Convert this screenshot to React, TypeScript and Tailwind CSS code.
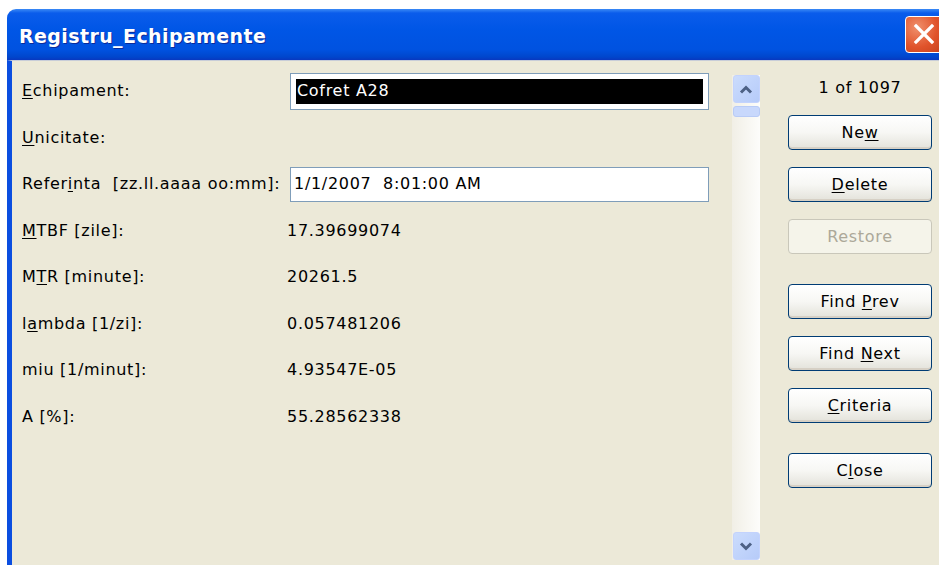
import { ReactNode } from "react";

// Underlines the access-key letter of a caption
const Key = ({ children }: { children: ReactNode }) => <span className="underline underline-offset-2">{children}</span>;

type Field = {
  label: ReactNode;
  value: string;
  kind: "text" | "selected" | "input" | "empty";
};

const fields: Field[] = [
  { label: <><Key>E</Key>chipament:</>, value: "Cofret A28", kind: "selected" },
  { label: <><Key>U</Key>nicitate:</>, value: "", kind: "empty" },
  { label: <>Refer<Key>i</Key>nta&nbsp; [zz.ll.aaaa oo:mm]:</>, value: "1/1/2007\u00a0 8:01:00 AM", kind: "input" },
  { label: <><Key>M</Key>TBF [zile]:</>, value: "17.39699074", kind: "text" },
  { label: <>M<Key>T</Key>R [minute]:</>, value: "20261.5", kind: "text" },
  { label: <>l<Key>a</Key>mbda [1/zi]:</>, value: "0.057481206", kind: "text" },
  { label: <>miu [1/minut]:</>, value: "4.93547E-05", kind: "text" },
  { label: <>A [%]:</>, value: "55.28562338", kind: "text" },
];

const Button = ({ children, disabled, className = "" }: { children: ReactNode; disabled?: boolean; className?: string }) => (
  <div
    className={`h-[35px] w-[144px] rounded-[4px] border flex items-center justify-center ${
      disabled
        ? "border-[#c9c7ba] bg-[#f5f4ea] text-[#aca899]"
        : "border-[#003c74] bg-gradient-to-b from-white via-[#f7f7f4] to-[#e3e2da] text-black shadow-[inset_0_-2px_0_#d6d0c5]"
    } ${className}`}
  >
    <span>{children}</span>
  </div>
);

const Arrow = ({ up }: { up?: boolean }) => (
  <div className="h-[28px] w-[27px] rounded-[3px] border border-[#c3d3fd] bg-gradient-to-br from-[#cbdcfd] to-[#b6cbf9] flex items-center justify-center">
    <svg width="14" height="9" viewBox="0 0 14 9">
      <path d={up ? "M2 7.5 L7 2.5 L12 7.5" : "M2 1.5 L7 6.5 L12 1.5"} fill="none" stroke="#4d6185" strokeWidth="3" />
    </svg>
  </div>
);

export default function App() {
  return (
    <div className="w-[939px] h-[565px] bg-white pt-[9px] pl-[7px] overflow-hidden font-['DejaVu_Sans',sans-serif] text-[16px] tracking-[0.7px] text-black">
      <div className="h-[556px] flex flex-col rounded-tl-[9px] overflow-hidden">
        {/* title bar */}
        <div className="h-[51px] shrink-0 flex items-center justify-between pl-[12px] bg-[linear-gradient(to_bottom,#3b8af5_0%,#0a5ceb_8%,#0056e6_40%,#0052e0_80%,#0046cc_94%,#0838c0_100%)]">
          <span className="text-white font-bold text-[19px] tracking-[0.4px] [text-shadow:1px_1px_0_#0b2a9a] mt-[4px]">Registru_Echipamente</span>
          <div className="h-[37px] w-[40px] -mr-[6px] mt-[-1px] rounded-[4px] border border-white bg-[radial-gradient(circle_at_30%_30%,#f0906c,#e0532b_55%,#c2401c)] flex items-center pl-[7px]">
            <svg width="22" height="22" viewBox="0 0 22 22">
              <path d="M3 3 L19 19 M19 3 L3 19" stroke="white" strokeWidth="3.2" strokeLinecap="square" />
            </svg>
          </div>
        </div>

        {/* dialog body */}
        <div className="flex-1 flex bg-[#ece9d8] border-l-[5px] border-[#0b4ee0] border-t border-t-[#c8cdd8]">
          <div className="w-[720px] pt-[7px] pl-[10px]">
            {fields.map((f, i) => (
              <div key={i} className="h-[46.5px] flex items-center">
                <div className="w-[265px] shrink-0 whitespace-nowrap">{f.label}</div>
                {f.kind === "text" && <div>{f.value}</div>}
                {f.kind === "selected" && (
                  <div className="ml-[3px] h-[37px] w-[419px] border border-[#7f9db9] bg-white p-[5px]">
                    <div className="h-full bg-black text-white flex items-center pl-[1px] leading-none">{f.value}</div>
                  </div>
                )}
                {f.kind === "input" && (
                  <div className="ml-[3px] h-[35px] w-[419px] border border-[#7f9db9] bg-white flex items-center pl-[3px]">{f.value}</div>
                )}
              </div>
            ))}
          </div>

          {/* scroll bar */}
          <div className="w-[28px] mt-[14px] mb-[5px] flex flex-col justify-between items-center bg-gradient-to-r from-[#f1efe6] to-[#fdfdfb]">
            <div className="flex flex-col items-center gap-[3px]">
              <Arrow up />
              <div className="h-[11px] w-[27px] rounded-[3px] border border-[#b8cbf6] bg-[#c8d8fc]" />
            </div>
            <Arrow />
          </div>

          {/* command buttons */}
          <div className="flex-1 flex flex-col items-start pl-[28px] pt-[15px]">
            <div className="w-[144px] text-center h-[23px] leading-[23px]">1 of 1097</div>
            <Button className="mt-[16px]">Ne<Key>w</Key></Button>
            <Button className="mt-[17px]"><Key>D</Key>elete</Button>
            <Button className="mt-[17px]" disabled>Restore</Button>
            <Button className="mt-[30px]">Find <Key>P</Key>rev</Button>
            <Button className="mt-[17px]">Find <Key>N</Key>ext</Button>
            <Button className="mt-[17px]"><Key>C</Key>riteria</Button>
            <Button className="mt-[30px]">C<Key>l</Key>ose</Button>
          </div>
        </div>
      </div>
    </div>
  );
}
